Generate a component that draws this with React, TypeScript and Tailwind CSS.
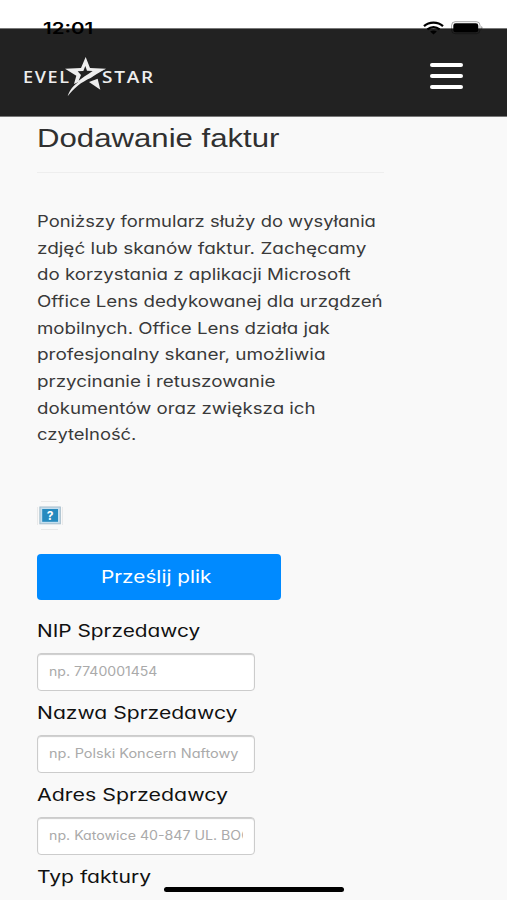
import React, { useLayoutEffect, useRef, useState } from 'react';

interface FitTextProps {
  children: string;
  width: number;
  className?: string;
}

// Single line of text, stretched horizontally to a given width
const FitText = ({ children, width, className = '' }: FitTextProps) => {
  const ref = useRef<HTMLSpanElement>(null);
  const [scale, setScale] = useState(1);

  useLayoutEffect(() => {
    if (ref.current) setScale(width / ref.current.offsetWidth);
  }, [width, children]);

  return (
    <span className="block text-left" style={{ width }}>
      <span
        ref={ref}
        className={`inline-block origin-left whitespace-nowrap ${className}`}
        style={{ transform: `scaleX(${scale})` }}
      >
        {children}
      </span>
    </span>
  );
};

const INTRO = [
  { text: 'Poniższy formularz służy do wysyłania', width: 339 },
  { text: 'zdjęć lub skanów faktur. Zachęcamy', width: 329 },
  { text: 'do korzystania z aplikacji Microsoft', width: 313 },
  { text: 'Office Lens dedykowanej dla urządzeń', width: 346 },
  { text: 'mobilnych. Office Lens działa jak', width: 293 },
  { text: 'profesjonalny skaner, umożliwia', width: 288 },
  { text: 'przycinanie i retuszowanie', width: 239 },
  { text: 'dokumentów oraz zwiększa ich', width: 279 },
  { text: 'czytelność.', width: 100 },
];

const FIELDS = [
  { label: 'NIP Sprzedawcy', labelWidth: 163, hint: 'np. 7740001454', hintWidth: 108 },
  { label: 'Nazwa Sprzedawcy', labelWidth: 201, hint: 'np. Polski Koncern Naftowy', hintWidth: 189 },
  { label: 'Adres Sprzedawcy', labelWidth: 191, hint: 'np. Katowice 40-847 UL. BOC', hintWidth: 203 },
];

const StatusBar = () => (
  <div className="absolute inset-x-0 top-[19px] z-10 flex h-[18px] items-center justify-between pl-[43px] pr-[23px] text-black">
    <FitText width={50} className="text-[16px] leading-[18px] font-semibold">12:01</FitText>
    <div className="flex items-center gap-[8px]">
      <svg width="21" height="14" viewBox="0 0 21 14" fill="none" stroke="currentColor">
        <path d="M1 5.2C6.2.5 14.8.5 20 5.2" strokeWidth="2.3" />
        <path d="M4.4 8.4c3.6-3 8.6-3 12.2 0" strokeWidth="2.2" />
        <path d="M7.1 10.6c2-1.6 4.8-1.6 6.8 0l-3.4 2.9z" fill="currentColor" stroke="none" />
      </svg>
      <svg className="overflow-visible" width="32" height="14" viewBox="0 0 32 14">
        <rect x="-.4" y=".7" width="28.4" height="12" rx="3.6" fill="none" stroke="#000" strokeOpacity=".35" />
        <rect x="1.3" y="2.3" width="25" height="9" rx="2.4" />
        <path d="M29.4 5c1.4.6 1.4 3 0 3.6z" fillOpacity=".5" />
      </svg>
    </div>
  </div>
);

const Logo = () => (
  <div className="mt-[2px] flex items-center text-[#eee]">
    <FitText width={48} className="font-['Open_Sans',sans-serif] text-[16.5px] leading-[20px] font-semibold tracking-[1.5px]">EVEL</FitText>
    <svg className="-ml-[7px] -mr-[6px] shrink-0" width="44" height="42" viewBox="0 0 132 126" fill="currentColor">
      {/* upper part of the star, cut off along the tail */}
      <path d="M65 3 78 36 126 38Q88 54 66 68L30 84 37 59 3 38 51 36z" />
      <path d="M64 30 69 44 86 45 73 54 62 61 44 74 51 57 41 46 58 45z" fill="#222" />
      <path d="M126 38Q96 54 80 66C52 78 30 96 11 121 17 99 34 82 57 68 77 54 99 44 126 38z" />
      <path d="M75 78 101 68 109 101z" />
    </svg>
    <FitText width={53} className="font-['Open_Sans',sans-serif] text-[16.5px] leading-[20px] font-semibold tracking-[1.5px]">STAR</FitText>
  </div>
);

const Header = () => (
  <header className="flex h-[89px] items-center justify-between border-y border-[#777] bg-[#222] pl-[23px] pr-[44px] pt-[7px]">
    <Logo />
    <button type="button" aria-label="Menu" className="flex flex-col gap-[7px]">
      <span className="h-[4px] w-[33px] rounded-xs bg-white" />
      <span className="h-[4px] w-[33px] rounded-xs bg-white" />
      <span className="h-[4px] w-[33px] rounded-xs bg-white" />
    </button>
  </header>
);

const MissingImage = () => (
  <svg className="block" width="26" height="30" viewBox="0 0 26 30">
    <path d="M4 .5h17M25.5 6v18M4 28.5h17M.5 6v18" stroke="#e9e9e9" />
    <rect x="2.9" y="6" width="20.4" height="16.8" fill="#c6dfef" stroke="#a3bccb" />
    <rect x="5.2" y="8" width="15.8" height="12.8" fill="#268abf" />
    <text x="13" y="19" textAnchor="middle" fill="#fff" fontSize="12" fontWeight="700">?</text>
  </svg>
);

export default function App() {
  return (
    <div className="relative h-[900px] w-[507px] overflow-hidden bg-[#f9f9f9] pt-[28px] font-[Inter,sans-serif] [font-feature-settings:'cv11'] before:absolute before:inset-x-0 before:top-0 before:h-[28px] before:bg-white">
      <StatusBar />
      <Header />

      <main className="pl-[37px]">
        <h1 className="h-[40px] pt-px font-['Liberation_Sans',sans-serif] text-[25px] leading-[40px] text-[#303030]">
          <FitText width={243}>Dodawanie faktur</FitText>
        </h1>
        <hr className="mt-[15px] w-[347px] border-[#eee]" />

        <p className="mt-[35px] text-[16px] leading-[26.65px] text-[#3a3a3a]">
          {INTRO.map((line) => (
            <FitText key={line.text} width={line.width}>{line.text}</FitText>
          ))}
        </p>

        <div className="mt-[53px]">
          <MissingImage />
        </div>

        <button type="button" className="mt-[23px] flex h-[46px] w-[244px] items-center rounded-[4px] bg-[#008aff] pl-[64px] pt-[2px] text-[17px] text-white">
          <FitText width={110}>Prześlij plik</FitText>
        </button>

        <form className="mt-[18px]">
          {FIELDS.map((field) => (
            <div key={field.label} className="h-[82px]">
              <label className="block h-[35px] text-[17px] leading-[27px] text-[#111]">
                <FitText width={field.labelWidth}>{field.label}</FitText>
              </label>
              <div className="flex h-[38px] w-[218px] items-center rounded-[4px] border border-[#ccc] bg-white px-[11px] text-[12.5px] text-[#aaa] shadow-[inset_0_1px_1px_#ccc]">
                <div className="w-full overflow-hidden">
                  <FitText width={field.hintWidth}>{field.hint}</FitText>
                </div>
              </div>
            </div>
          ))}
          <label className="block text-[17px] leading-[27px] text-[#111]">
            <FitText width={114}>Typ faktury</FitText>
          </label>
        </form>
      </main>

      {/* Home indicator */}
      <div className="absolute bottom-[8px] left-[164px] h-[5px] w-[180px] rounded-full bg-black" />
    </div>
  );
}
